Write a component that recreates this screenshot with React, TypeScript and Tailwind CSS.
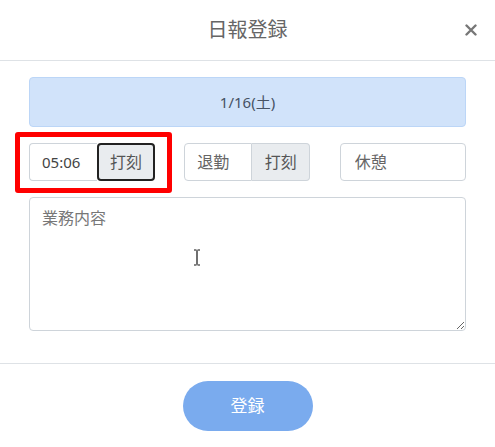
import React from 'react';

const FONT = { fontFamily: '"Noto Sans", "Noto Sans CJK JP", sans-serif' };

const App: React.FC = () => {
  return (
    <div className="w-[495px] h-[447px] bg-white flex flex-col text-[#495057]" style={FONT}>
      {/* Header */}
      <div className="relative h-[61px] flex items-center justify-center border-b border-[#dee2e6]">
        <h2 className="text-[20px] text-[#666] leading-none">日報登録</h2>
        <button className="absolute right-[18px] top-[24px] p-0 text-[#777]">
          <svg width="12" height="12" viewBox="0 0 12 12" fill="none" stroke="currentColor" strokeWidth="2.4" strokeLinecap="round">
            <path d="M1.5 1.5l9 9M10.5 1.5l-9 9" />
          </svg>
        </button>
      </div>

      {/* Body */}
      <div className="px-[29px] pt-[16px] pb-[32px] flex flex-col gap-[16px]">
        <div className="h-[50px] rounded-[4px] bg-[#d1e3fa] border border-[#bcd6f7] flex items-center justify-center text-[15px] text-[#465264]">
          1/16(土)
        </div>

        <div className="grid grid-cols-3 gap-[29px]">
          <div className="relative flex h-[38px]">
            <input
              defaultValue="05:06"
              className="w-[68px] h-full border border-[#ced4da] border-r-0 rounded-l-[4px] px-[12px] text-[15px] text-[#444] outline-none"
            />
            <button className="w-[58px] h-full bg-[#e9ecef] border-2 border-[#222] rounded-[4px] text-[16px] text-[#555]">
              打刻
            </button>
            <div className="absolute left-[-14px] top-[-11px] w-[157px] h-[61px] border-[5px] border-[#ff0000] rounded-[3px] pointer-events-none" />
          </div>

          <div className="flex h-[38px]">
            <input
              placeholder="退勤"
              className="w-[68px] h-full border border-[#ced4da] rounded-l-[4px] px-[12px] text-[16px] placeholder:text-[#666] outline-none"
            />
            <button className="w-[58px] h-full bg-[#e9ecef] border border-l-0 border-[#ced4da] rounded-r-[4px] text-[16px] text-[#555]">
              打刻
            </button>
          </div>

          <input
            placeholder="休憩"
            className="h-[38px] w-full border border-[#ced4da] rounded-[4px] px-[14px] text-[16px] placeholder:text-[#666] outline-none"
          />
        </div>

        <div className="relative">
          <textarea
            placeholder="業務内容"
            className="block w-full h-[134px] border border-[#ced4da] rounded-[4px] px-[12px] py-[8px] text-[16px] placeholder:text-[#777] outline-none"
          />
          {/* mouse cursor */}
          <svg className="absolute left-[164px] top-[52px] pointer-events-none" width="8" height="17" viewBox="0 0 8 17" fill="none" stroke="#111" strokeWidth="1.2">
            <path d="M1 1h2.5M4.5 1H7M4 1.5v14M1 16h2.5M4.5 16H7" />
          </svg>
        </div>
      </div>

      {/* Footer */}
      <div className="border-t border-[#dee2e6] flex justify-center pt-[17px]">
        <button className="w-[130px] h-[50px] rounded-full bg-[#7aabee] text-white text-[17px]">登録</button>
      </div>
    </div>
  );
};

export default App;
